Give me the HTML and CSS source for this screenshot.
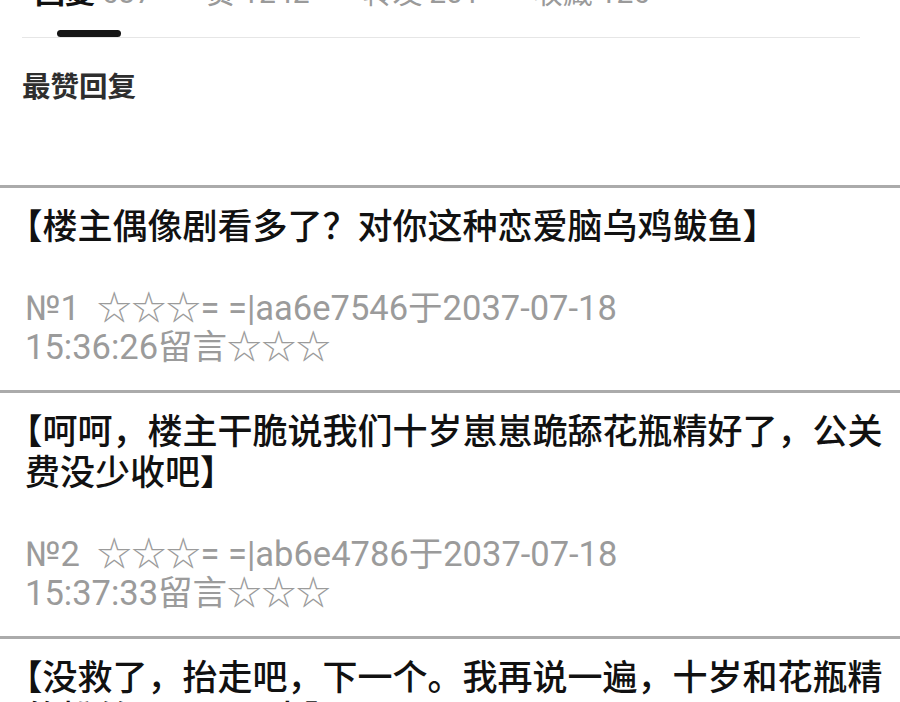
FILE: index.html
```html
<!DOCTYPE html>
<html lang="zh-CN">
<head>
<meta charset="utf-8">
<title>最赞回复</title>
<link rel="stylesheet" href="styles.css">
</head>
<body>
<header class="tabbar">
  <nav class="tabs">
    <span class="tab active"><b class="label">回复</b> <span class="count">637</span></span>
    <span class="tab"><span class="label">赞</span> <span class="count">1242</span></span>
    <span class="tab"><span class="label">转发</span> <span class="count">201</span></span>
    <span class="tab"><span class="label">收藏</span> <span class="count">126</span></span>
  </nav>
  <div class="indicator"></div>
</header>

<h2 class="section-title">最赞回复</h2>

<ul class="replies">
  <li class="reply">
    <p class="reply-text">【楼主偶像剧看多了？对你这种恋爱脑乌鸡鲅鱼】</p>
    <p class="reply-meta">№1&nbsp; ☆☆☆= =|aa6e7546于2037-07-18<br>15:36:26留言☆☆☆</p>
  </li>
  <li class="reply">
    <p class="reply-text">【呵呵，楼主干脆说我们十岁崽崽跪舔花瓶精好了，公关费没少收吧】</p>
    <p class="reply-meta">№2&nbsp; ☆☆☆= =|ab6e4786于2037-07-18<br>15:37:33留言☆☆☆</p>
  </li>
  <li class="reply">
    <p class="reply-text">【没救了，抬走吧，下一个。我再说一遍，十岁和花瓶精的粉丝不是一回事】</p>
    <p class="reply-meta">№3&nbsp; ☆☆☆= =|ac6e5127于2037-07-18<br>15:38:02留言☆☆☆</p>
  </li>
</ul>
</body>
</html>
```

FILE: styles.css
```css
html, body {
  margin: 0;
  padding: 0;
  background: #ffffff;
}

body {
  width: 900px;
  overflow: hidden;
  font-family: "Noto Sans CJK SC", sans-serif;
  color: #111;
}

/* top tab strip, scrolled partly out of view */
.tabbar {
  margin: 0 40px 0 22px;
  border-bottom: 1px solid #e6e6e6;
}

.tabs {
  display: flex;
  gap: 53px;
  padding-left: 13px;
  margin-top: -25px;
  height: 30px;
  font-size: 30px;
  line-height: 30px;
  color: #9a9a9a;
  white-space: nowrap;
}

.tab .label {
  font-weight: 400;
}

.tab.active .label {
  color: #111;
  font-weight: 700;
}

.tab .count {
  font-family: Roboto, "Noto Sans CJK SC", sans-serif;
}

.indicator {
  width: 64px;
  height: 7px;
  border-radius: 4px;
  background: #151515;
  margin: 25px 0 0 35px;
}

.section-title {
  margin: 29px 0 0;
  padding: 0 0 82px 22px;
  font-size: 28.5px;
  line-height: 36px;
  font-weight: 700;
  color: #2e2e2e;
}

.replies {
  list-style: none;
  margin: 0;
  padding: 0;
}

.reply {
  border-top: 3px solid #ababab;
  padding: 15px 8px 23px 25px;
}

/* opening bracket at the line start is set half-width */
.reply-text {
  margin: 0;
  font-size: 35px;
  line-height: 41px;
  font-weight: 500;
  color: #111;
  text-spacing-trim: trim-start;
}

.reply-meta {
  margin: 45px 0 0;
  font-family: Roboto, "Noto Sans CJK SC", sans-serif;
  font-size: 34.5px;
  line-height: 39px;
  color: #9b9b9b;
}
```
